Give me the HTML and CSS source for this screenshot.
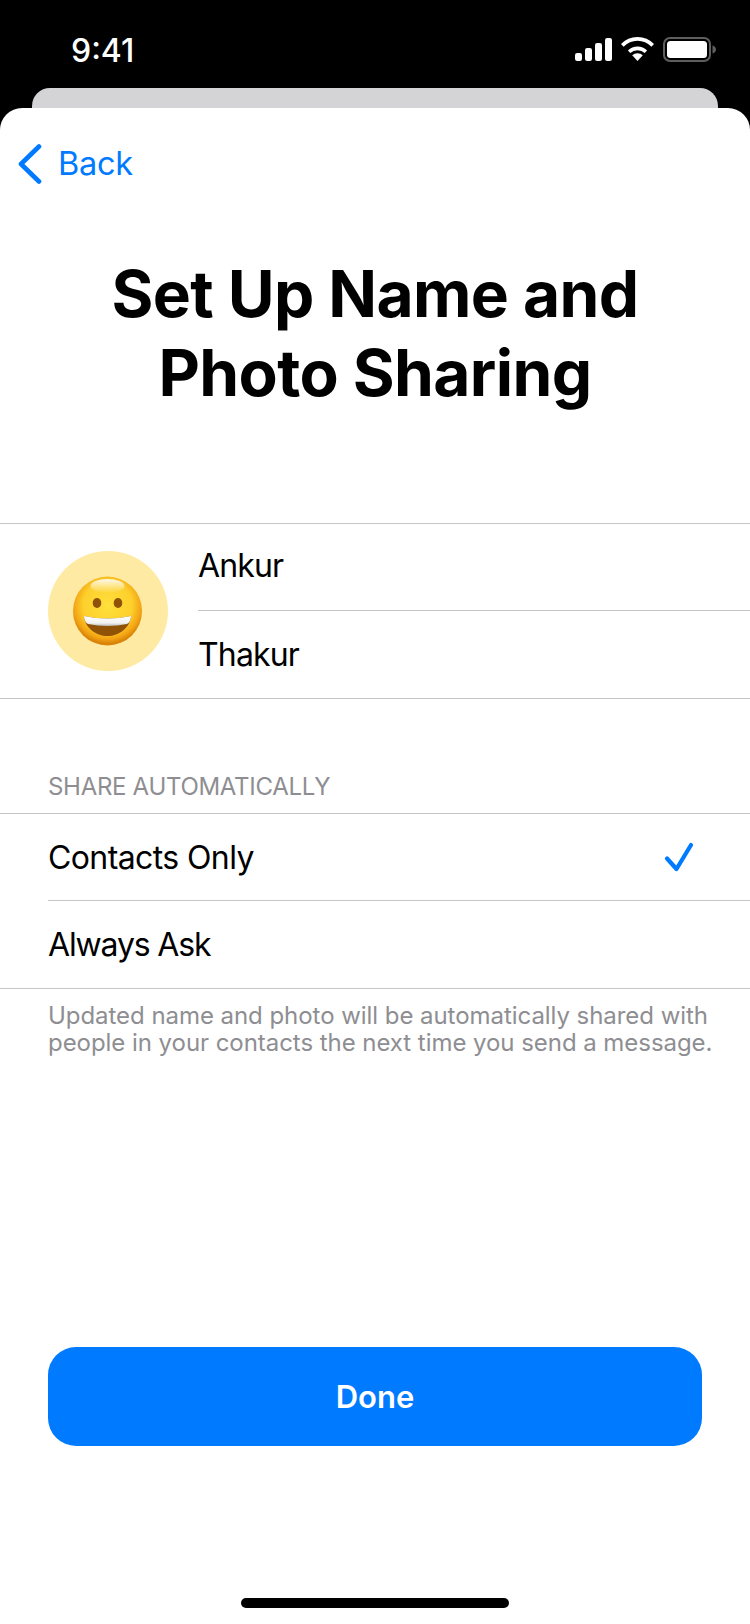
FILE: index.html
```html
<!DOCTYPE html>
<html lang="en">
<head>
<meta charset="utf-8">
<title>Set Up Name and Photo Sharing</title>
<link rel="stylesheet" href="styles.css">
</head>
<body>
<div class="screen">
  <header class="status">
    <span class="time">9:41</span>
    <div class="status-icons">
      <svg class="signal" width="37" height="23" viewBox="0 0 37 23"><rect x="0" y="15" width="7" height="8" rx="2.2"/><rect x="10" y="10" width="7" height="13" rx="2.2"/><rect x="20" y="5" width="7" height="18" rx="2.2"/><rect x="30" y="0" width="7" height="23" rx="2.2"/></svg>
      <svg class="wifi" width="33" height="24" viewBox="0 0 33 24"><path d="M16.5 24 11.2 18.3a7.6 7.6 0 0 1 10.6 0Z"/><path d="M16.5 9.6a14 14 0 0 1 9.6 3.9l-2.4 2.5a10.6 10.6 0 0 0-14.4 0l-2.4-2.5a14 14 0 0 1 9.6-3.9Z"/><path d="M16.5 0A22.6 22.6 0 0 1 33 7.1l-2.6 2.6a19 19 0 0 0-27.8 0L0 7.1A22.6 22.6 0 0 1 16.5 0Z"/></svg>
      <svg class="battery" width="53" height="25" viewBox="0 0 53 25"><rect x="1" y="1" width="46" height="23" rx="6" fill="none" stroke="#5e5e5e" stroke-width="2"/><rect x="4" y="4" width="40" height="17" rx="3.5" fill="#fff"/><path d="M49.5 8.5c2 .6 3.5 2 3.5 4s-1.500 3.400-3.500 4Z" fill="#5e5e5e"/></svg>
    </div>
  </header>
  <div class="behind"></div>
  <main class="sheet">
    <nav class="nav">
      <svg class="chevron" width="24" height="40" viewBox="0 0 24 40"><path d="M21 2.500 3 20l18 17.500" fill="none" stroke="#007aff" stroke-width="4.600" stroke-linecap="round" stroke-linejoin="round"/></svg>
      <span class="back">Back</span>
    </nav>
    <h1 class="title">Set Up Name and<br>Photo Sharing</h1>
    <section class="profile">
      <div class="avatar">
        <svg width="70" height="70" viewBox="0 0 70 70">
          <defs>
            <radialGradient id="face" cx="50%" cy="42%" r="55%">
              <stop offset="0" stop-color="#ffe03c"/>
              <stop offset=".65" stop-color="#fdcf2c"/>
              <stop offset=".88" stop-color="#f3a514"/>
              <stop offset="1" stop-color="#d98408"/>
            </radialGradient>
            <linearGradient id="shine" x1="0" y1="0" x2="0" y2="1">
              <stop offset="0" stop-color="#fff" stop-opacity=".9"/>
              <stop offset="1" stop-color="#fff" stop-opacity="0"/>
            </linearGradient>
            <linearGradient id="teeth" x1="0" y1="0" x2="0" y2="1">
              <stop offset="0" stop-color="#fff"/>
              <stop offset=".7" stop-color="#f1f1f1"/>
              <stop offset="1" stop-color="#b9b9b9"/>
            </linearGradient>
          </defs>
          <circle cx="34.500" cy="35" r="34.500" fill="url(#face)"/>
          <ellipse cx="34.500" cy="10" rx="17" ry="7" fill="url(#shine)"/>
          <ellipse cx="24" cy="27" rx="4.300" ry="5" fill="#8f5206"/>
          <ellipse cx="45" cy="27" rx="4.300" ry="5" fill="#8f5206"/>
          <path d="M11 40Q34.500 45 58 40C57 52 46 60 34.500 60S12 52 11 40Z" fill="#8f5206"/>
          <path d="M11 40Q34.500 45 58 40C58 44 56 47 54 48Q34.500 52 15 48C13 47 11 44 11 40Z" fill="url(#teeth)"/>
        </svg>
      </div>
      <div class="names">
        <div class="name-row name-first">Ankur</div>
        <div class="name-row name-last">Thakur</div>
      </div>
    </section>
    <h2 class="section-label">SHARE AUTOMATICALLY</h2>
    <section class="options">
      <div class="option option-first">
        <span>Contacts Only</span>
        <svg class="check" width="30" height="30" viewBox="0 0 30 30"><path d="M3 16.500 12.500 27 27 3" fill="none" stroke="#007aff" stroke-width="4.200" stroke-linecap="round" stroke-linejoin="round"/></svg>
      </div>
      <div class="option">
        <span class="always">Always Ask</span>
      </div>
    </section>
    <p class="note">Updated name and photo will be automatically shared with people in your contacts the next time you send a message.</p>
    <button class="done" type="button">Done</button>
    <div class="home-wrap"><div class="home"></div></div>
  </main>
</div>
</body>
</html>
```
FILE: styles.css
```css
* { box-sizing: border-box; }
html, body { margin: 0; padding: 0; }
body { font-family: Inter, "Liberation Sans", sans-serif; background: #000; }
.screen { width: 750px; height: 1624px; display: flex; flex-direction: column; background: #000; overflow: hidden; }

.status { height: 88px; display: flex; justify-content: space-between; align-items: flex-start; padding: 0 34px 0 71px; color: #fff; flex: none; }
.time { font-size: 32px; font-weight: 500; line-height: 36px; margin-top: 33px; }
.status-icons { display: flex; align-items: flex-start; margin-top: 37px; }
.status-icons svg { display: block; fill: #fff; }
.signal { margin-top: 1px; margin-right: 9px; }
.wifi { margin-right: 9px; }

.behind { flex: none; height: 20px; margin: 0 32px; background: #d4d4d6; border-radius: 18px 18px 0 0; }
.sheet { flex: 1; background: #fff; border-radius: 22px 22px 0 0; display: flex; flex-direction: column; }

.nav { display: flex; align-items: center; height: 40px; margin-top: 36px; padding-left: 18px; color: #007aff; flex: none; }
.chevron { display: block; }
.back { font-size: 32.500px; line-height: 40px; margin-left: 16px; letter-spacing: -.3px; }

.title { margin: 70px 0 0; font-size: 64px; font-weight: 700; line-height: 79px; text-align: center; color: #000; letter-spacing: -.6px; }

.profile { margin-top: 111px; height: 176px; display: flex; align-items: center; border-top: 1px solid #c6c6c8; border-bottom: 1px solid #c6c6c8; padding-left: 48px; flex: none; }
.avatar { width: 120px; height: 120px; border-radius: 50%; background: #ffeaa3; display: flex; align-items: center; justify-content: center; flex: none; }
.avatar svg { display: block; }
.names { margin-left: 30px; flex: 1; align-self: stretch; display: flex; flex-direction: column; }
.name-row { flex: 0 0 87px; display: flex; align-items: center; font-size: 32px; color: #000; letter-spacing: -.85px; }
.name-first { border-bottom: 1px solid #c6c6c8; padding-bottom: 4px; }
.name-last { padding-bottom: 1px; }

.section-label { margin: 73px 0 0 48px; font-size: 24px; font-weight: 400; line-height: 30px; color: #8e8e92; letter-spacing: -.3px; height: 41px; }

.options { border-top: 1px solid #c6c6c8; border-bottom: 1px solid #c6c6c8; flex: none; }
.option { height: 87px; display: flex; align-items: center; justify-content: space-between; font-size: 32px; letter-spacing: -.6px; margin-left: 48px; padding-right: 56px; }
.option-first { border-bottom: 1px solid #c6c6c8; }
.always { letter-spacing: -1.15px; }
.check { display: block; }

.note { margin: 13px 30px 0 48px; font-size: 24px; line-height: 27px; color: #8e8e92; letter-spacing: -.05px; }

.done { margin: 291px 48px 0; height: 99px; border: 0; border-radius: 28px; background: #007aff; color: #fff; font-family: inherit; font-size: 31px; font-weight: 600; flex: none; }

.home-wrap { margin-top: 152px; display: flex; justify-content: center; }
.home { width: 268px; height: 10px; border-radius: 5px; background: #000; }
```
